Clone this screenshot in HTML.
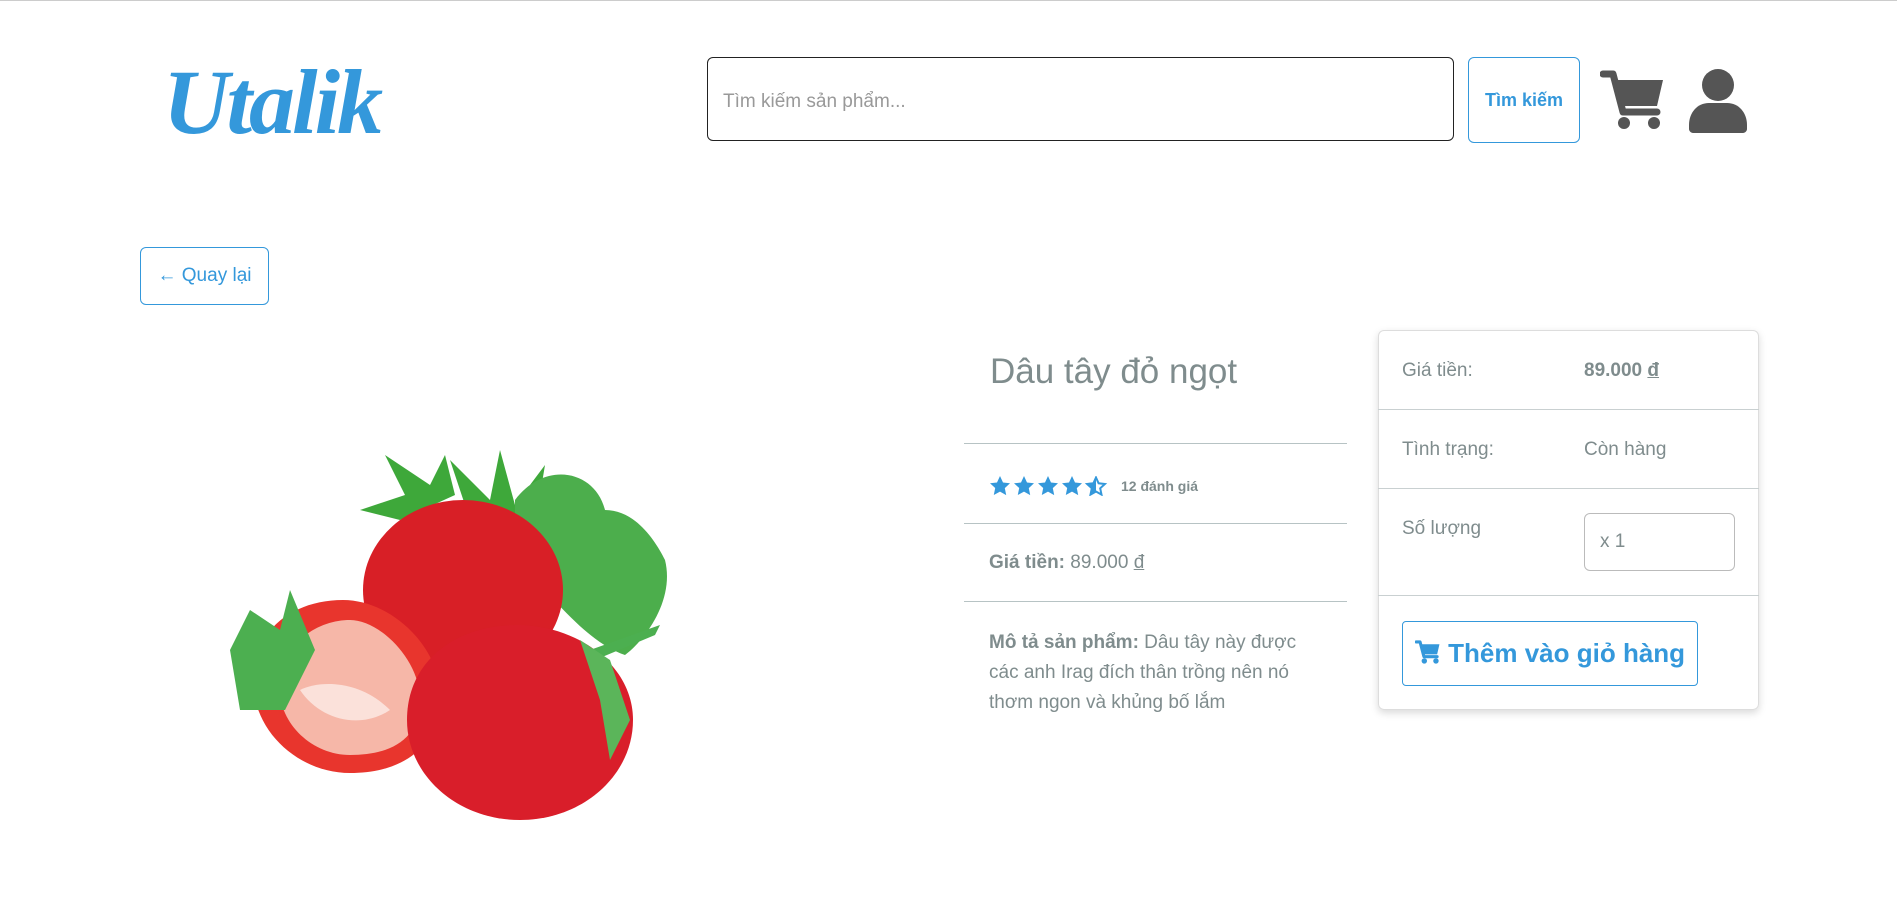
<!DOCTYPE html>
<html><head><meta charset="utf-8"><style>
body{margin:0;width:1897px;height:912px;background:#fff;font-family:"Liberation Sans","DejaVu Sans",sans-serif;position:relative;overflow:hidden;color:#7f8c8d}
.a{position:absolute}
.topline{left:0;top:0;width:1897px;height:1px;background:#ccc}
.search{left:707px;top:57px;width:747px;height:84px;border:1px solid #222;border-radius:6px;box-sizing:border-box;font-size:19px;color:#999;padding-left:15px;line-height:88px}
.sbtn{left:1468px;top:57px;width:112px;height:86px;border:1px solid #3498db;border-radius:6px;box-sizing:border-box;color:#3498db;font-weight:bold;font-size:18px;text-align:center;line-height:84px}
.back{left:140px;top:247px;width:129px;height:58px;border:1px solid #3498db;border-radius:6px;box-sizing:border-box;color:#3498db;font-size:19px;line-height:56px;text-align:center}
.hr{left:964px;width:383px;height:1px;background:#b7c3c4}
.card{left:1378px;top:330px;width:381px;height:380px;border:1px solid #ddd;border-radius:6px;box-sizing:border-box;box-shadow:0 3px 8px rgba(0,0,0,.15)}
.sep{left:1378px;width:381px;height:1px;background:#c9d0d1}
.t{font-size:19px;color:#7f8c8d}
</style></head><body>
<div class="a topline"></div>
<div class="a" style="left:163px;top:52px;font-family:'Liberation Serif',serif;font-style:italic;font-weight:bold;font-size:92px;color:#3498db;letter-spacing:-3px;line-height:100px">Utalik</div>
<div class="a search">Tìm kiếm sản phẩm...</div>
<div class="a sbtn">Tìm kiếm</div>
<svg class="a" style="left:1600px;top:70px" width="67" height="60" viewBox="0 0 67 60"><path d="M3 4h10l10 38h34" fill="none" stroke="#555" stroke-width="7" stroke-linecap="round" stroke-linejoin="round"/><path d="M15 10h48l-6 26H22z" fill="#555"/><circle cx="24" cy="53" r="6" fill="#555"/><circle cx="54" cy="53" r="6" fill="#555"/></svg>
<svg class="a" style="left:1689px;top:69px" width="58" height="64" viewBox="0 0 58 64"><circle cx="29" cy="16" r="16" fill="#555"/><path d="M0 56c0-12 8-22 20-22h18c12 0 20 10 20 22v4c0 2-2 4-4 4H4c-2 0-4-2-4-4z" fill="#555"/></svg>
<div class="a back">&#8592; Quay lại</div>
<svg class="a" style="left:0;top:0" width="700" height="830">
<g fill="#3ea83a"><path d="M470 520l-20-60 40 40 10-50 15 55 30-40-10 60z"/><path d="M515 500c30-40 80-30 90 10 30 0 50 30 60 50 10 40-20 80-40 95-30-10-60-40-110-100z" fill="#4cae4c"/><path d="M400 520l-40-10 45-15-20-40 45 30 15-30 10 40z"/></g>
<ellipse cx="463" cy="590" rx="100" ry="90" fill="#d81f26"/>
<path d="M253 680c0-50 40-80 90-80s100 50 97 100c-3 50-40 73-90 73s-97-40-97-93z" fill="#e8352d"/>
<path d="M280 680c5-40 40-60 70-60s70 40 70 80c0 40-30 55-70 55s-75-35-70-75z" fill="#f6b7a8"/>
<path d="M300 690c20-10 60-10 90 20c-30 20-70 10-90-20z" fill="#fbe1da"/>
<path d="M230 650l20-40 30 20 10-40 25 60-30 60-45 0z" fill="#4caf50"/>
<path d="M407 720c0-60 50-95 110-95s116 40 116 95c0 55-50 100-113 100s-113-45-113-100z" fill="#d91e2a"/>
<path d="M590 650l70-25-5 10-60 25z" fill="#4caf50"/><path d="M580 640l30 20 20 60-20 40-10-60z" fill="#5bb55a"/>
</svg>
<div class="a" style="left:990px;top:352px;font-size:35px;color:#7f8c8d">Dâu tây đỏ ngọt</div>
<div class="a hr" style="top:443px"></div>
<div class="a hr" style="top:523px"></div>
<div class="a hr" style="top:601px"></div>
<svg class="a" style="left:990px;top:476px" width="118" height="20" viewBox="0 0 118 20">
<g fill="#3498db"><path id="s" d="M10 0l3 6.5 7 .8-5.2 4.8 1.4 7L10 15.6 3.8 19l1.4-7L0 7.3l7-.8z"/><use href="#s" x="24"/><use href="#s" x="48"/><use href="#s" x="72"/></g>
<path d="M106 1.5l2.6 5.8 6.3.7-4.7 4.3 1.3 6.3-5.5-3.1-5.5 3.1 1.3-6.3-4.7-4.3 6.3-.7z" fill="none" stroke="#3498db" stroke-width="2"/><path d="M106 0v15.6L99.8 19l1.4-7L96 7.3l7-.8z" fill="#3498db"/>
</svg>
<div class="a" style="left:1121px;top:478px;font-size:14px;font-weight:bold;color:#7f8c8d">12 đánh giá</div>
<div class="a t" style="left:989px;top:552px"><b>Giá tiền:</b> 89.000 <u>đ</u></div>
<div class="a t" style="left:989px;top:628px;width:340px;line-height:30px"><b>Mô tả sản phẩm:</b> Dâu tây này được các anh Irag đích thân trồng nên nó thơm ngon và khủng bố lắm</div>
<div class="a card"></div>
<div class="a sep" style="top:409px"></div>
<div class="a sep" style="top:488px"></div>
<div class="a sep" style="top:595px"></div>
<div class="a t" style="left:1402px;top:360px">Giá tiền:</div>
<div class="a t" style="left:1584px;top:360px;font-weight:bold">89.000 <u>đ</u></div>
<div class="a t" style="left:1402px;top:439px">Tình trạng:</div>
<div class="a t" style="left:1584px;top:439px">Còn hàng</div>
<div class="a t" style="left:1402px;top:518px">Số lượng</div>
<div class="a" style="left:1584px;top:513px;width:151px;height:58px;border:1px solid #bbb;border-radius:6px;box-sizing:border-box;font-size:19px;line-height:56px;padding-left:15px;color:#7f8c8d">x 1</div>
<div class="a" style="left:1402px;top:621px;width:296px;height:65px;border:1px solid #3498db;border-radius:4px;box-sizing:border-box;color:#3498db;font-weight:bold;font-size:26px;line-height:63px;text-align:center"><svg width="26" height="24" viewBox="0 0 67 60" style="vertical-align:-2px"><path d="M3 4h10l10 38h34" fill="none" stroke="#3498db" stroke-width="8" stroke-linecap="round" stroke-linejoin="round"/><path d="M15 10h48l-6 26H22z" fill="#3498db"/><circle cx="24" cy="53" r="7" fill="#3498db"/><circle cx="54" cy="53" r="7" fill="#3498db"/></svg> Thêm vào giỏ hàng</div>
</body></html>
